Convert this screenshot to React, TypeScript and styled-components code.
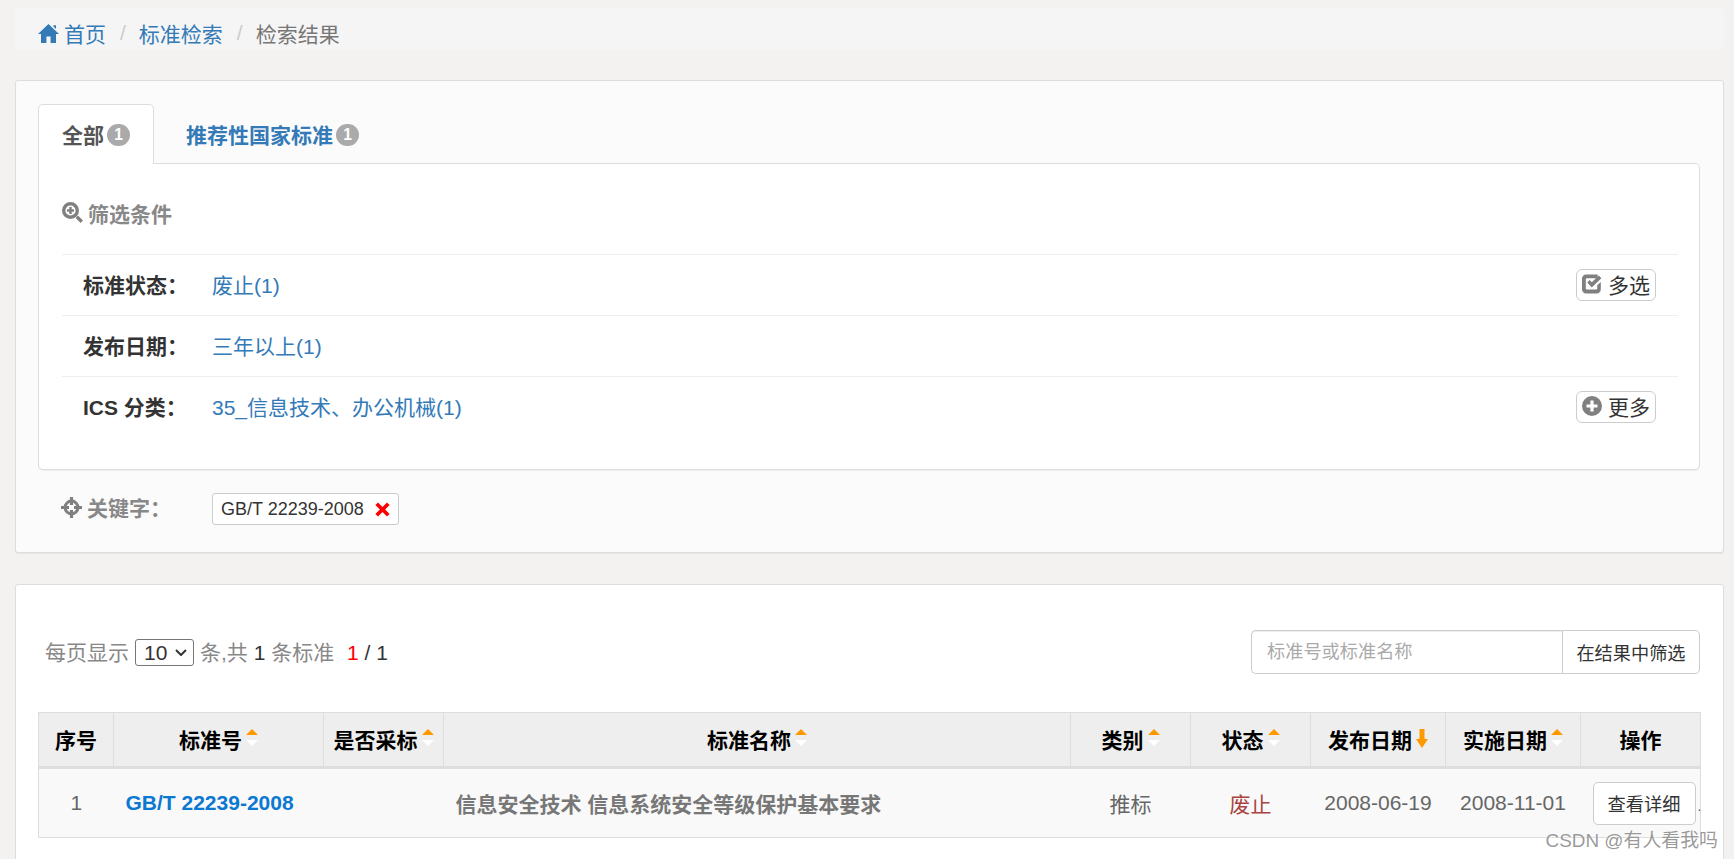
import React from 'react';
import styled, { createGlobalStyle } from 'styled-components';

const GlobalStyle = createGlobalStyle`
html, body {
    margin: 0;
    height: 859px;
    overflow: hidden;
    background: #f3f2f1;
}
body {
    font-family: "Liberation Sans", "Noto Sans CJK SC", sans-serif;
    font-size: 21px;
    color: #333;
}
* {
    box-sizing: border-box;
}
`

function HomeIcon() {
    return (
        <Glyph width="21" height="21" viewBox="0 0 21 21" $color="#337ab7">
            <path d="M10.5 1 L21 11 L18 11 L18 20 L12.6 20 L12.6 13.5 L8.4 13.5 L8.4 20 L3 20 L3 11 L0 11 Z" />
            <path d="M15.4 2.2 H18 V6 L15.4 3.6 Z" />
        </Glyph>
    )
}

function ZoomIcon() {
    return (
        <Glyph width="21" height="21" viewBox="0 0 21 21" $color="#808080">
            <path fillRule="evenodd" d="M8.5 0 a8.5 8.5 0 1 1 0 17 a8.5 8.5 0 0 1 0 -17 Z M8.5 3.4 a5.1 5.1 0 1 0 0 10.2 a5.1 5.1 0 0 0 0 -10.2 Z" />
            <path d="M7.3 5 H9.7 V7.3 H12 V9.7 H9.7 V12 H7.3 V9.7 H5 V7.3 H7.3 Z" />
            <path d="M13.6 16 L16 13.6 L21 18.6 L18.6 21 Z" />
        </Glyph>
    )
}

function TargetIcon() {
    return (
        <Glyph width="21" height="21" viewBox="0 0 21 21" $color="#808080">
            <path fillRule="evenodd" d="M10.5 2.6 a7.9 7.9 0 1 1 0 15.8 a7.9 7.9 0 0 1 0 -15.8 Z M10.5 5.6 a4.9 4.9 0 1 0 0 9.8 a4.9 4.9 0 0 0 0 -9.8 Z" />
            <path d="M8.9 0 H12.1 V8 H8.9 Z M8.9 13 H12.1 V21 H8.9 Z M0 8.9 H8 V12.1 H0 Z M13 8.9 H21 V12.1 H13 Z" />
        </Glyph>
    )
}

function CheckIcon() {
    return (
        <Glyph width="20" height="20" viewBox="0 0 20 20" $color="#808080">
            <path d="M4 0.6 H15.6 V4.2 H5 C4.4 4.2 3.8 4.8 3.8 5.4 V14.4 C3.8 15 4.4 15.6 5 15.6 H14 C14.6 15.6 15.2 15 15.2 14.4 V11.2 L18.8 8 V15.4 C18.8 17.6 17 19.4 14.8 19.4 H4 C1.8 19.4 0 17.6 0 15.4 V4.6 C0 2.4 1.8 0.6 4 0.6 Z" />
            <path d="M5.2 8.4 L7.6 6 L9.8 8.2 L16.8 1.6 L19.4 4.2 L9.8 13.4 Z" />
        </Glyph>
    )
}

function PlusCircleIcon() {
    return (
        <Glyph width="20" height="20" viewBox="0 0 20 20" $color="#808080">
            <path fillRule="evenodd" d="M10 0 a10 10 0 1 1 0 20 a10 10 0 0 1 0 -20 Z M8.4 4.5 V8.4 H4.5 V11.6 H8.4 V15.5 H11.6 V11.6 H15.5 V8.4 H11.6 V4.5 Z" />
        </Glyph>
    )
}

function RemoveIcon() {
    return (
        <Glyph width="15" height="15" viewBox="0 0 15 15" $color="#ff0000">
            <path d="M3 0.4 L7.5 4.9 L12 0.4 L14.6 3 L10.1 7.5 L14.6 12 L12 14.6 L7.5 10.1 L3 14.6 L0.4 12 L4.9 7.5 L0.4 3 Z" />
        </Glyph>
    )
}

// both triangles of a sortable column, the active one in orange
function SortArrows(props: { down?: boolean }) {
    if (props.down) {
        return (
            <SortGlyph width="12" height="22" viewBox="0 0 12 22">
                <path d="M3.5 1 H8.5 V11 H12 L6 20 L0 11 H3.5 Z" fill="#ff9900" />
            </SortGlyph>
        )
    }
    return (
        <SortGlyph width="12" height="22" viewBox="0 0 12 22">
            <path d="M6 1 L12 7 H0 Z" fill="#ff9900" />
            <path d="M0 12 H12 L6 18 Z" fill="#ffffff" />
        </SortGlyph>
    )
}

function App() {
    return (
        <Page>
            <GlobalStyle />
            <Breadcrumb>
                <HomeIcon />
                <CrumbLink>首页</CrumbLink>
                <CrumbSep>/</CrumbSep>
                <CrumbLink>标准检索</CrumbLink>
                <CrumbSep>/</CrumbSep>
                <CrumbCurrent>检索结果</CrumbCurrent>
            </Breadcrumb>

            <FilterPanel>
                <Tabs>
                    <Tab $active>全部<Badge>1</Badge></Tab>
                    <Tab>推荐性国家标准<Badge>1</Badge></Tab>
                </Tabs>
                <TabBody>
                    <SectionTitle><ZoomIcon />筛选条件</SectionTitle>
                    <FilterRow>
                        <FilterLabel>标准状态：</FilterLabel>
                        <FilterValue>废止(1)</FilterValue>
                        <SmallButton><CheckIcon />多选</SmallButton>
                    </FilterRow>
                    <FilterRow>
                        <FilterLabel>发布日期：</FilterLabel>
                        <FilterValue>三年以上(1)</FilterValue>
                    </FilterRow>
                    <FilterRow>
                        <FilterLabel>ICS 分类：</FilterLabel>
                        <FilterValue>35_信息技术、办公机械(1)</FilterValue>
                        <SmallButton><PlusCircleIcon />更多</SmallButton>
                    </FilterRow>
                </TabBody>
                <KeywordRow>
                    <KeywordLabel><TargetIcon />关键字：</KeywordLabel>
                    <KeywordTag>GB/T 22239-2008<RemoveIcon /></KeywordTag>
                </KeywordRow>
            </FilterPanel>

            <ResultPanel>
                <Toolbar>
                    <PageInfo>
                        每页显示
                        <PageSelect defaultValue="10">
                            <option value="10">10</option>
                            <option value="25">25</option>
                            <option value="50">50</option>
                        </PageSelect>
                        条,共 <Dark>1</Dark> 条标准 <Current>1</Current> <Dark>/ 1</Dark>
                    </PageInfo>
                    <SearchGroup>
                        <SearchInput placeholder="标准号或标准名称" />
                        <SearchButton>在结果中筛选</SearchButton>
                    </SearchGroup>
                </Toolbar>

                <ResultTable>
                    <colgroup>
                        <col style={{ width: 75 }} />
                        <col style={{ width: 210 }} />
                        <col style={{ width: 120 }} />
                        <col style={{ width: 627 }} />
                        <col style={{ width: 120 }} />
                        <col style={{ width: 120 }} />
                        <col style={{ width: 135 }} />
                        <col style={{ width: 135 }} />
                        <col style={{ width: 120 }} />
                    </colgroup>
                    <thead>
                        <tr>
                            <HeadCell>序号</HeadCell>
                            <HeadCell>标准号<SortArrows /></HeadCell>
                            <HeadCell>是否采标<SortArrows /></HeadCell>
                            <HeadCell>标准名称<SortArrows /></HeadCell>
                            <HeadCell>类别<SortArrows /></HeadCell>
                            <HeadCell>状态<SortArrows /></HeadCell>
                            <HeadCell>发布日期<SortArrows down /></HeadCell>
                            <HeadCell>实施日期<SortArrows /></HeadCell>
                            <HeadCell>操作</HeadCell>
                        </tr>
                    </thead>
                    <tbody>
                        <tr>
                            <BodyCell>1</BodyCell>
                            <StandardCell>GB/T 22239-2008</StandardCell>
                            <BodyCell></BodyCell>
                            <NameCell>信息安全技术 信息系统安全等级保护基本要求</NameCell>
                            <BodyCell>推标</BodyCell>
                            <StatusCell>废止</StatusCell>
                            <BodyCell>2008-06-19</BodyCell>
                            <BodyCell>2008-11-01</BodyCell>
                            <ActionCell><DetailButton>查看详细</DetailButton><Dot>.</Dot></ActionCell>
                        </tr>
                    </tbody>
                </ResultTable>
            </ResultPanel>

            <Watermark>CSDN @有人看我吗</Watermark>
        </Page>
    )
}

export default App;

const Page = styled.div`
position: relative;
height: 859px;
overflow: hidden;
padding: 8px 10px 0 15px;
`

const Glyph = styled.svg<{ $color: string }>`
flex: none;
fill: ${(props) => props.$color};
`

const SortGlyph = styled.svg`
display: inline-block;
vertical-align: middle;
margin-left: 4px;
margin-top: -5px;
`

const Breadcrumb = styled.div`
display: flex;
align-items: center;
height: 42px;
padding: 8px 23px 0 23px;
background: #f5f5f5;
border-radius: 5px;
svg {
    margin-right: 5px;
}
`

const CrumbLink = styled.span`
color: #337ab7;
`

const CrumbSep = styled.span`
color: #ccc;
margin: 0 13px 0 14px;
`

const CrumbCurrent = styled.span`
color: #777;
`

const FilterPanel = styled.section`
height: 473px;
margin-top: 30px;
padding: 23px 23px 0 22px;
background: #fbfbfb;
border: 1px solid #ddd;
border-radius: 3px;
box-shadow: 0 1px 1px rgba(0, 0, 0, 0.05);
`

const Tabs = styled.div`
display: flex;
height: 59px;
`

const Tab = styled.div<{ $active?: boolean }>`
display: flex;
align-items: center;
height: ${(props) => (props.$active ? '60px' : '59px')};
padding: 0 23px ${(props) => (props.$active ? '2px' : '0')};
font-weight: bold;
color: ${(props) => (props.$active ? '#555' : '#337ab7')};
background: ${(props) => (props.$active ? '#fff' : 'transparent')};
border: 1px solid ${(props) => (props.$active ? '#ddd' : 'transparent')};
border-bottom: none;
border-radius: 5px 5px 0 0;
margin-right: 8px;
position: relative;
z-index: 1;
`

const Badge = styled.span`
display: inline-flex;
align-items: center;
justify-content: center;
width: 23px;
height: 22px;
margin: 2px 0 0 3px;
border-radius: 11px;
background: #aaa;
color: #fff;
font-size: 15.6px;
font-weight: bold;
`

const TabBody = styled.div`
height: 307px;
padding: 0 21px 0 23px;
background: #fff;
border: 1px solid #ddd;
border-radius: 0 5px 5px 5px;
box-shadow: 0 1px 1px rgba(0, 0, 0, 0.05);
`

const SectionTitle = styled.div`
display: flex;
align-items: center;
gap: 5px;
height: 90px;
padding-top: 7px;
font-weight: bold;
color: #888;
`

const FilterRow = styled.div`
display: flex;
align-items: center;
height: 61px;
padding: 0 22px 2px 21px;
border-top: 1px solid #eee;
`

const FilterLabel = styled.div`
width: 129px;
font-weight: bold;
color: #333;
`

const FilterValue = styled.div`
flex: 1;
color: #337ab7;
`

const SmallButton = styled.button`
display: flex;
align-items: center;
gap: 6px;
width: 80px;
height: 32px;
margin-top: 1px;
padding: 0 5px 2px;
font: inherit;
color: #333;
background: #fff;
border: 1px solid #ccc;
border-radius: 6px;
`

const KeywordRow = styled.div`
display: flex;
align-items: center;
height: 78px;
padding-left: 23px;
`

const KeywordLabel = styled.div`
display: flex;
align-items: center;
gap: 5px;
width: 151px;
padding-bottom: 4px;
font-weight: bold;
color: #888;
`

const KeywordTag = styled.div`
display: flex;
align-items: center;
gap: 11px;
height: 32px;
padding: 0 8px;
font-size: 18px;
background: #fff;
border: 1px solid #ccc;
border-radius: 3px;
`

const ResultPanel = styled.section`
height: 320px;
margin-top: 31px;
padding: 45px 23px 0 22px;
background: #fff;
border: 1px solid #ddd;
border-radius: 3px;
`

const Toolbar = styled.div`
display: flex;
align-items: center;
justify-content: space-between;
height: 44px;
`

const PageInfo = styled.div`
padding-left: 7px;
padding-bottom: 2px;
color: #888;
`

const Dark = styled.span`
color: #333;
`

const Current = styled.span`
color: #ff0000;
margin-left: 7px;
`

const PageSelect = styled.select`
appearance: none;
width: 59px;
height: 27px;
margin: 0 6px 0 6px;
padding: 0 0 0 8px;
font: inherit;
color: #333;
background: #fff url("data:image/svg+xml,%3Csvg xmlns='http://www.w3.org/2000/svg' width='12' height='7' viewBox='0 0 12 7'%3E%3Cpath d='M1 1 L6 6 L11 1' fill='none' stroke='%23333' stroke-width='2'/%3E%3C/svg%3E") no-repeat right 6px center;
border: 1px solid #767676;
border-radius: 3px;
`

const SearchGroup = styled.div`
display: flex;
width: 449px;
height: 44px;
`

const SearchInput = styled.input`
flex: 1;
min-width: 0;
padding: 0 15px;
font-family: inherit;
font-size: 18.2px;
background: #fff;
border: 1px solid #ccc;
border-right: none;
border-radius: 5px 0 0 5px;
box-shadow: inset 0 1px 1px rgba(0, 0, 0, 0.075);
&::placeholder {
    color: #aaa;
}
`

const SearchButton = styled.button`
width: 138px;
font-family: inherit;
font-size: 18.2px;
color: #333;
background: #fff;
border: 1px solid #ccc;
border-radius: 0 5px 5px 0;
`

const ResultTable = styled.table`
width: 1662px;
margin-top: 38px;
table-layout: fixed;
border-collapse: collapse;
border: 1px solid #ddd;
`

const HeadCell = styled.th`
height: 55px;
padding: 0 0 2px;
font-size: 21px;
font-weight: bold;
color: #000;
text-align: center;
white-space: nowrap;
background: #eee;
border: 1px solid #ddd;
border-bottom: 3px solid #ddd;
`

const BodyCell = styled.td`
height: 70px;
padding: 0;
text-align: center;
color: #666;
background: #f9f9f9;
white-space: nowrap;
`

const StandardCell = styled(BodyCell)`
padding-left: 12px;
text-align: left;
font-weight: bold;
color: #0b78d1;
`

const NameCell = styled(BodyCell)`
padding-left: 12px;
text-align: left;
font-weight: bold;
color: #777;
`

const StatusCell = styled(BodyCell)`
color: #a94442;
`

const ActionCell = styled(BodyCell)`
padding-left: 12px;
text-align: left;
`

const DetailButton = styled.button`
width: 103px;
height: 43px;
padding: 0;
font-family: inherit;
font-size: 18.2px;
color: #333;
background: #fff;
border: 1px solid #ccc;
border-radius: 5px;
`

const Dot = styled.span`
font-size: 14px;
margin-left: 2px;
`

const Watermark = styled.div`
position: absolute;
right: 16px;
top: 825px;
font-size: 18.9px;
color: rgba(120, 120, 120, 0.75);
text-shadow: 0 0 2px #fff;
`
